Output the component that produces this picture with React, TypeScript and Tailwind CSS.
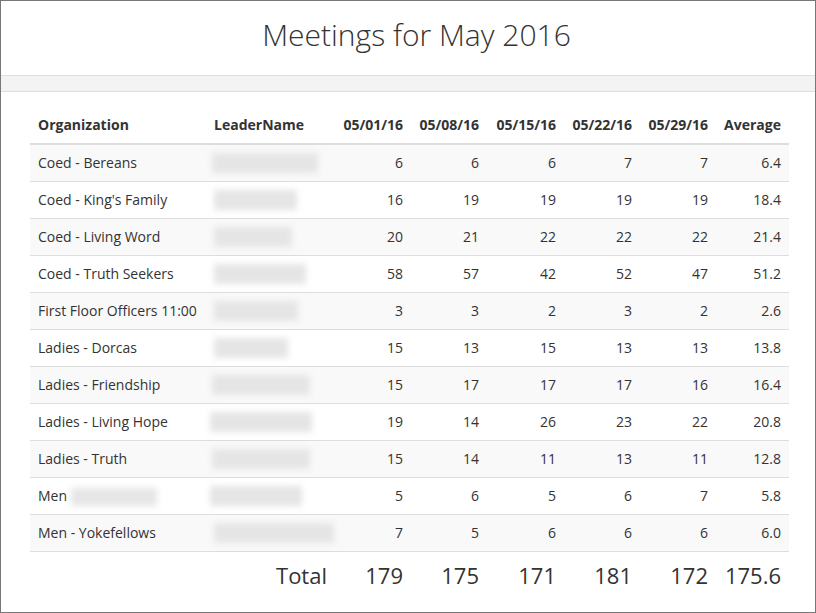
const rows = [
  { org: 'Coed - Bereans', blur: 'w-[106px] -ml-[2px]', v: [6, 6, 6, 7, 7], avg: '6.4' },
  { org: "Coed - King's Family", blur: 'w-[83px]', v: [16, 19, 19, 19, 19], avg: '18.4' },
  { org: 'Coed - Living Word', blur: 'w-[78px]', v: [20, 21, 22, 22, 22], avg: '21.4' },
  { org: 'Coed - Truth Seekers', blur: 'w-[92px]', v: [58, 57, 42, 52, 47], avg: '51.2' },
  { org: 'First Floor Officers 11:00', blur: 'w-[84px]', v: [3, 3, 2, 3, 2], avg: '2.6' },
  { org: 'Ladies - Dorcas', blur: 'w-[74px]', v: [15, 13, 15, 13, 13], avg: '13.8' },
  { org: 'Ladies - Friendship', blur: 'w-[98px] -ml-[2px]', v: [15, 17, 17, 17, 16], avg: '16.4' },
  { org: 'Ladies - Living Hope', blur: 'w-[102px] -ml-[4px]', v: [19, 14, 26, 23, 22], avg: '20.8' },
  { org: 'Ladies - Truth', blur: 'w-[98px] -ml-[2px]', v: [15, 14, 11, 13, 11], avg: '12.8' },
  { org: 'Men', orgBlur: true, blur: 'w-[92px] -ml-[4px]', v: [5, 6, 5, 6, 7], avg: '5.8' },
  { org: 'Men - Yokefellows', blur: 'w-[120px]', v: [7, 5, 6, 6, 6], avg: '6.0' },
];

const dates = ['05/01/16', '05/08/16', '05/15/16', '05/22/16', '05/29/16'];
const totals = ['179', '175', '171', '181', '172', '175.6'];

export default function App() {
  return (
    <div className="w-[816px] h-[613px] border border-[#777] bg-white text-[#333] font-['Open_Sans',sans-serif] overflow-hidden">
      <h1 className="h-[74px] flex items-center justify-center pl-[17px] pb-[8px] text-[30px] font-light text-[#333]">
        Meetings for May 2016
      </h1>
      <div className="h-[17px] bg-[#f3f3f3] border-y border-[#dedede]" />
      <div className="pt-[15px] px-[29px]">
        <table className="w-[759px] table-fixed border-collapse text-[14px]">
          <colgroup>
            <col className="w-[176px]" />
            <col className="w-[129px]" />
            <col className="w-[76px]" />
            <col className="w-[76px]" />
            <col className="w-[77px]" />
            <col className="w-[76px]" />
            <col className="w-[76px]" />
            <col className="w-[73px]" />
          </colgroup>
          <thead>
            <tr className="h-[37px] border-b-2 border-[#ddd]">
              <th className="text-left font-bold px-2 pb-[2px]">Organization</th>
              <th className="text-left font-bold px-2 pb-[2px]">LeaderName</th>
              {dates.map((d) => (
                <th key={d} className="text-right font-bold px-2 pb-[2px]">{d}</th>
              ))}
              <th className="text-right font-bold px-2 pb-[2px]">Average</th>
            </tr>
          </thead>
          <tbody>
            {rows.map((r, i) => (
              <tr key={i} className={`h-[37px] border-b border-[#ddd] ${i % 2 === 0 ? 'bg-[#f9f9f9]' : 'bg-white'}`}>
                <td className="px-2 whitespace-nowrap">
                  {r.org}
                  {r.orgBlur && (
                    <span className="inline-block align-middle ml-1 w-[86px] h-[18px] bg-[#e6e6e6] blur-[3px]" />
                  )}
                </td>
                <td className="px-2">
                  <span className={`block h-[20px] bg-[#e5e5e5] blur-[3px] ${r.blur}`} />
                </td>
                {r.v.map((n, j) => (
                  <td key={j} className="px-2 text-right">{n}</td>
                ))}
                <td className="px-2 text-right">{r.avg}</td>
              </tr>
            ))}
            <tr className="h-[48px] text-[22px]">
              <td />
              <td className="px-2 text-right">Total</td>
              {totals.map((t, j) => (
                <td key={j} className="px-2 text-right">{t}</td>
              ))}
            </tr>
          </tbody>
        </table>
      </div>
    </div>
  );
}
